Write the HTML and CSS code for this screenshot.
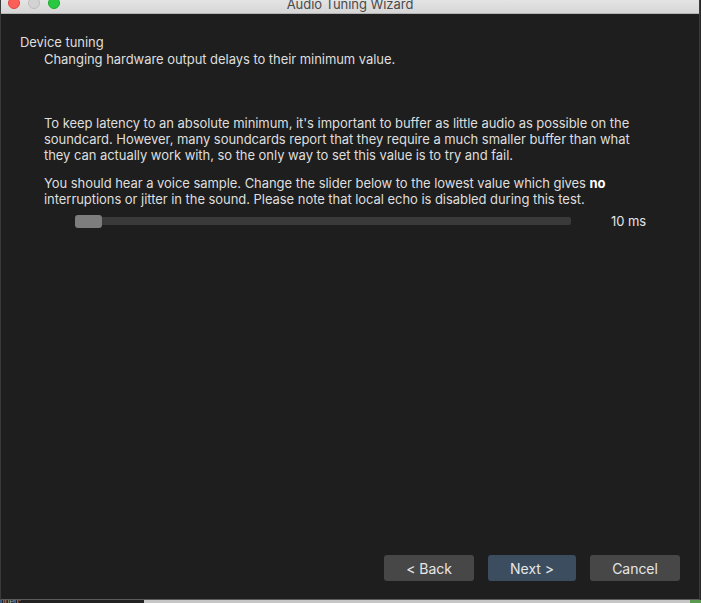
FILE: index.html
```html
<!DOCTYPE html>
<html>
<head>
<meta charset="utf-8">
<link rel="stylesheet" href="styles.css">
</head>
<body>
<div class="window">
  <div class="titlebar">
    <div class="lights">
      <span class="light red"></span>
      <span class="light gray"></span>
      <span class="light green"></span>
    </div>
    <div class="title">Audio Tuning Wizard</div>
  </div>
  <div class="content">
    <div class="header">
      <div class="h-title">Device tuning</div>
      <div class="h-sub">Changing hardware output delays to their minimum value.</div>
    </div>
    <div class="body">
      <p>To keep latency to an absolute minimum, it's important to buffer as little audio as possible on the soundcard. However, many soundcards report that they require a much smaller buffer than what they can actually work with, so the only way to set this value is to try and fail.</p>
      <p>You should hear a voice sample. Change the slider below to the lowest value which gives <b>no</b> interruptions or jitter in the sound. Please note that local echo is disabled during this test.</p>
      <div class="slider-row">
        <div class="slider">
          <div class="thumb"></div>
          <div class="groove"></div>
        </div>
        <div class="value">10 ms</div>
      </div>
    </div>
    <div class="buttons">
      <div class="btn">&lt; Back</div>
      <div class="btn primary">Next &gt;</div>
      <div class="btn">Cancel</div>
    </div>
  </div>
</div>
<div class="under">
  <div class="under-dark">nnen:</div>
  <div class="under-light"></div>
  <div class="under-green"></div>
</div>
</body>
</html>
```
FILE: styles.css
```css
html, body {
  margin: 0;
  padding: 0;
  background: #2a2a2a;
  overflow: hidden;
  font-family: Inter, "Liberation Sans", Arial, sans-serif;
}
.window {
  width: 700px;
  height: 600px;
  background: #1e1e1e;
  display: flex;
  flex-direction: column;
  border-right: 1px solid #3a3a3a;
  border-left: 1px solid #3a3a3a;
  border-bottom: 1px solid #5a5a5a;
  box-sizing: border-box;
  overflow: hidden;
}
.titlebar {
  margin-top: -8px;
  height: 22px;
  flex: none;
  background: linear-gradient(#ececec, #d6d6d6);
  border-bottom: 1px solid #b4b4b4;
  display: flex;
  align-items: center;
  position: relative;
  box-sizing: border-box;
}
.lights {
  display: flex;
  gap: 8px;
  padding-left: 7px;
  margin-top: 1px;
}
.light {
  width: 12px;
  height: 12px;
  border-radius: 50%;
  box-sizing: border-box;
}
.red { background: #fc5f57; border: 1px solid #e0443e; }
.gray { background: #d3d3d3; border: 1px solid #bdbdbd; }
.green { background: #28c940; border: 1px solid #1aab29; }
.title {
  position: absolute;
  left: 0;
  right: 0;
  text-align: center;
  font-size: 13px;
  color: #4a4a4a;
  top: 4px;
  letter-spacing: -0.05px;
}
.content {
  flex: 1;
  display: flex;
  flex-direction: column;
  color: #dedede;
  font-size: 13px;
  letter-spacing: -0.05px;
}
.header {
  padding: 20px 0 0 19px;
  line-height: 17px;
}
.h-sub {
  padding-left: 24px;
}
.body {
  padding: 0 0 0 43px;
  margin-top: 47px;
  flex: 1;
}
.body p {
  margin: 0 0 12px 0;
  line-height: 16px;
  width: 596px;
}
.body b { color: #ffffff; }
.slider-row {
  display: flex;
  align-items: center;
  margin-top: -6px;
}
.slider {
  display: flex;
  align-items: center;
  margin-left: 31px;
  width: 496px;
}
.thumb {
  width: 27px;
  height: 13px;
  background: #7d7d7d;
  border-radius: 3px;
  flex: none;
}
.groove {
  flex: 1;
  height: 8px;
  background: #3a3a3a;
  border-radius: 0 2px 2px 0;
}
.value {
  margin-left: 40px;
  font-size: 13px;
  color: #e4e4e4;
}
.buttons {
  display: flex;
  justify-content: flex-end;
  gap: 14px;
  padding: 0 19px 18px 0;
}
.btn {
  width: 90px;
  height: 26px;
  background: #474747;
  border-radius: 3px;
  display: flex;
  align-items: center;
  justify-content: center;
  font-size: 14px;
  color: #e6e6e6;
}
.btn.primary {
  width: 88px;
  background: #3b4d5e;
}
.under {
  display: flex;
  height: 3px;
}
.under-dark {
  width: 144px;
  background: #222;
  color: #aaa;
  font-size: 8px;
  line-height: 3px;
  overflow: hidden;
}
.under-light {
  flex: 1;
  background: #c6c6c6;
}
.under-green {
  width: 11px;
  background: #5c9a52;
}
```
